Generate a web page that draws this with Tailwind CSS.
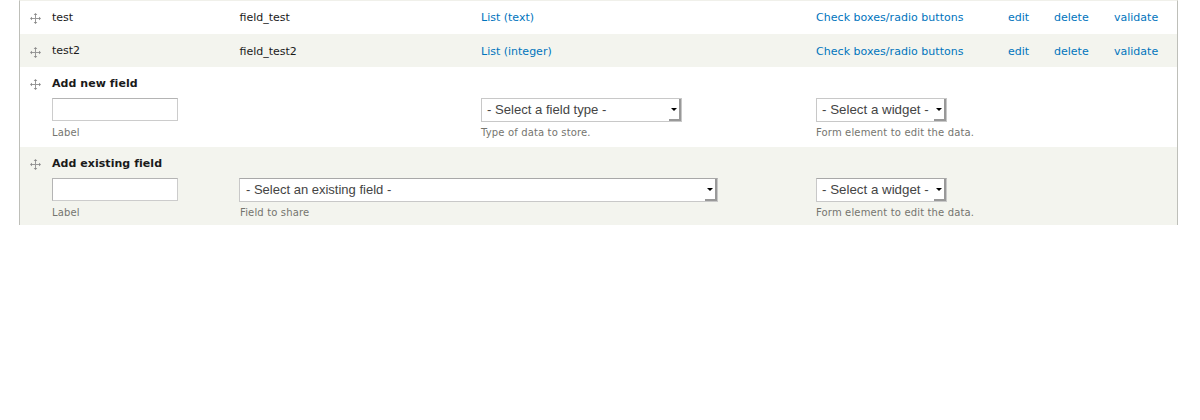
<!DOCTYPE html>
<html lang="en">
<head>
    <meta charset="UTF-8">
    <title>Manage fields</title>
    <script src="https://cdn.jsdelivr.net/npm/@tailwindcss/browser@4"></script>
</head>
<body class="bg-white font-['DejaVu_Sans',sans-serif] text-[11px] text-[#1a1a1a] h-[420px] overflow-hidden">

    <svg class="hidden">
        <symbol id="drag" viewBox="0 0 11 11">
            <path d="M5.5 1v9M1 5.5h9" stroke="#999" stroke-width="1" fill="none"/>
            <path d="M5.5 0l1.8 2h-3.6zM5.5 11l1.8-2h-3.6zM0 5.5l2-1.8v3.6zM11 5.5l-2-1.8v3.6z" fill="#8a8a8a"/>
        </symbol>
    </svg>

    <div class="ml-[19px] w-[1159px] h-[225px] border-x border-[#bebfb9] border-t border-t-[#f0f0ea]">

        <!-- Existing fields -->
        <div class="grid grid-cols-[219.5px_241.5px_335px_192px_46px_60px_1fr] h-[33px] pt-[1px] items-center">
            <div class="flex items-center pl-[10px]">
                <svg class="w-[11px] h-[11px] mr-[11px] mt-[1px]"><use href="#drag"/></svg>
                <span>test</span>
            </div>
            <div>field_test</div>
            <a class="text-[#0074bd]">List (text)</a>
            <a class="text-[#0074bd] tracking-[0.04px]">Check boxes/radio buttons</a>
            <a class="text-[#0074bd]">edit</a>
            <a class="text-[#0074bd]">delete</a>
            <a class="text-[#0074bd]">validate</a>
        </div>
        <div class="grid grid-cols-[219.5px_241.5px_335px_192px_46px_60px_1fr] h-[33px] pt-[3px] items-center bg-[#f3f4ee]">
            <div class="flex items-center pl-[10px]">
                <svg class="w-[11px] h-[11px] mr-[11px]"><use href="#drag"/></svg>
                <span class="-mt-[1px]">test2</span>
            </div>
            <div>field_test2</div>
            <a class="text-[#0074bd]">List (integer)</a>
            <a class="text-[#0074bd] tracking-[0.04px]">Check boxes/radio buttons</a>
            <a class="text-[#0074bd]">edit</a>
            <a class="text-[#0074bd]">delete</a>
            <a class="text-[#0074bd]">validate</a>
        </div>

        <!-- Add new field -->
        <div class="h-[80px] pt-[10px]">
            <div class="flex items-center pl-[10px] h-[14px]">
                <svg class="w-[11px] h-[11px] mr-[11px] mt-[1px]"><use href="#drag"/></svg>
                <strong class="font-bold tracking-[0.05px]">Add new field</strong>
            </div>
            <div class="grid grid-cols-[219.5px_241.5px_335px_1fr] mt-[7px]">
                <div class="pl-[32px]">
                    <div class="w-[126px] h-[23px] bg-white border border-[#ccc] border-t-[#b4b4b4]"></div>
                    <p class="mt-[4px] text-[10px] tracking-[0.15px] text-[#75756f]">Label</p>
                </div>
                <div></div>
                <div>
                    <div class="w-[201px] h-[24px] flex bg-white border border-[#c8c8c8] text-[13.1px] font-['Liberation_Sans',sans-serif] text-[#444]">
                        <span class="flex-1 pl-[5px] leading-[21px]">- Select a field type -</span>
                        <span class="w-[12px] flex items-center justify-center bg-white border-r-2 border-b-2 border-[#999]"><span class="w-0 h-0 border-x-[3px] border-x-transparent border-t-[3px] border-t-black"></span></span>
                    </div>
                    <p class="mt-[3px] text-[10px] tracking-[0.15px] text-[#75756f]">Type of data to store.</p>
                </div>
                <div>
                    <div class="w-[131px] h-[24px] flex bg-white border border-[#c8c8c8] text-[13.33px] font-['Liberation_Sans',sans-serif] text-[#444]">
                        <span class="flex-1 pl-[5px] leading-[21px]">- Select a widget -</span>
                        <span class="w-[12px] flex items-center justify-center bg-white border-r-2 border-b-2 border-[#999]"><span class="w-0 h-0 border-x-[3px] border-x-transparent border-t-[3px] border-t-black"></span></span>
                    </div>
                    <p class="mt-[3px] text-[10px] tracking-[0.15px] text-[#75756f]">Form element to edit the data.</p>
                </div>
            </div>
        </div>

        <!-- Add existing field -->
        <div class="h-[78px] pt-[10px] bg-[#f3f4ee]">
            <div class="flex items-center pl-[10px] h-[14px]">
                <svg class="w-[11px] h-[11px] mr-[11px] mt-[1px]"><use href="#drag"/></svg>
                <strong class="font-bold tracking-[0.05px]">Add existing field</strong>
            </div>
            <div class="grid grid-cols-[219px_577px_1fr] mt-[7px]">
                <div class="pl-[32px]">
                    <div class="w-[126px] h-[23px] bg-white border border-[#b4b4b4] border-b-[#ccc] border-r-[#ccc]"></div>
                    <p class="mt-[4px] text-[10px] tracking-[0.15px] text-[#75756f]">Label</p>
                </div>
                <div>
                    <div class="w-[479px] h-[24px] flex bg-white border border-[#c8c8c8] border-t-[#a8a8a8] text-[13px] font-['Liberation_Sans',sans-serif] text-[#444]">
                        <span class="flex-1 pl-[6px] leading-[21px]">- Select an existing field -</span>
                        <span class="w-[12px] flex items-center justify-center bg-white border-r-2 border-b-2 border-[#999]"><span class="w-0 h-0 border-x-[3px] border-x-transparent border-t-[3px] border-t-black"></span></span>
                    </div>
                    <p class="mt-[3px] ml-[1px] text-[10px] tracking-[0.15px] text-[#75756f]">Field to share</p>
                </div>
                <div>
                    <div class="w-[131px] h-[24px] flex bg-white border border-[#c8c8c8] border-t-[#a8a8a8] text-[13.33px] font-['Liberation_Sans',sans-serif] text-[#444]">
                        <span class="flex-1 pl-[5px] leading-[21px]">- Select a widget -</span>
                        <span class="w-[12px] flex items-center justify-center bg-white border-r-2 border-b-2 border-[#999]"><span class="w-0 h-0 border-x-[3px] border-x-transparent border-t-[3px] border-t-black"></span></span>
                    </div>
                    <p class="mt-[3px] text-[10px] tracking-[0.15px] text-[#75756f]">Form element to edit the data.</p>
                </div>
            </div>
        </div>
    </div>

</body>
</html>
